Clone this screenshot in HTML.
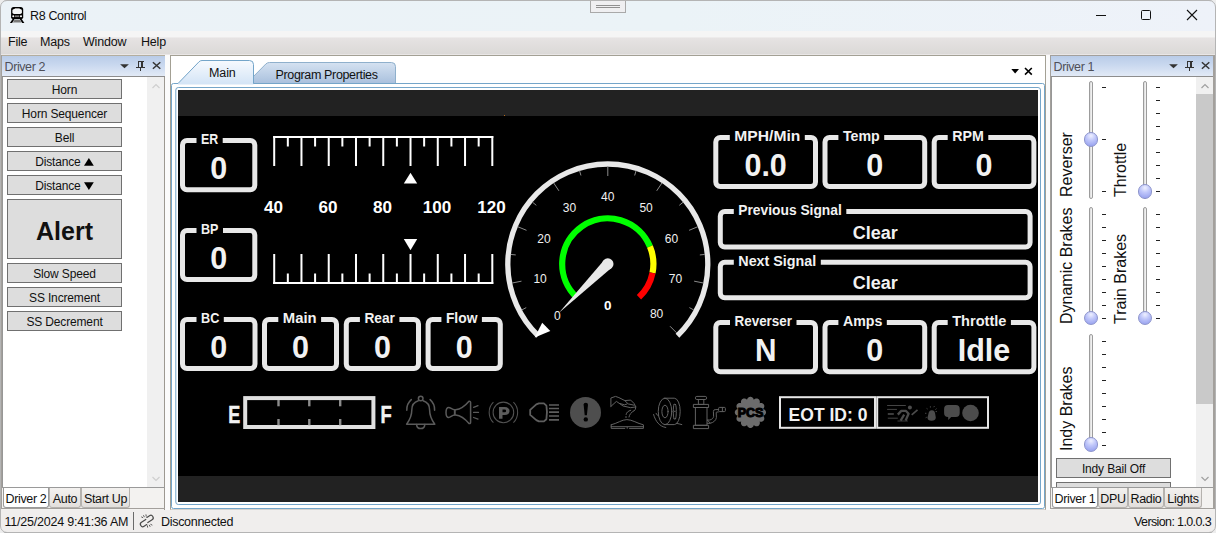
<!DOCTYPE html>
<html>
<head>
<meta charset="utf-8">
<title>R8 Control</title>
<style>
*{box-sizing:border-box;margin:0;padding:0}
html,body{width:1216px;height:533px;overflow:hidden;background:#f0eeed;font-family:"Liberation Sans",sans-serif;font-size:12px;color:#1a1a1a}
.abs{position:absolute}
#win{position:absolute;left:0;top:0;width:1216px;height:533px;overflow:hidden;background:#f0eeed}
#title{left:0;top:0;width:1216px;height:31px;background:linear-gradient(90deg,#ebf2f7 0%,#ebf3f7 55%,#eef2f9 100%)}
#title .cap{left:30px;top:9px;font-size:12.5px;color:#111;letter-spacing:-0.35px}
#menu{left:0;top:31px;width:1216px;height:24px;background:linear-gradient(#f5f5f5 0%,#f5f5f5 26%,#e6e3e3 28%,#dbd9d7 95.8%,#e9e6e6 95.9%)}
#menu span{position:absolute;top:4px;font-size:12.5px;color:#111;letter-spacing:-0.2px}
.phead{height:21px;background:linear-gradient(#b9cce8 0%,#c9d8ef 45%,#e2eaf6 100%);border-bottom:1px solid #8d8d8d}
.phead .t{position:absolute;left:2.5px;top:4px;font-size:12.5px;color:#4f4f58;letter-spacing:-0.4px}
.btn{position:absolute;background:#dddddd;border:1px solid #707070;text-align:center;font-size:12px;color:#111;letter-spacing:-0.15px}
.tab{position:absolute;top:487px;height:21px;font-size:12.5px;color:#111;text-align:center;line-height:24px;border-radius:0 0 3px 3px;letter-spacing:-0.35px;border:1px solid #b5b2ae;border-top:none;background:linear-gradient(#f4f2f0,#e2dfdc)}
.tab.sel{background:#fff;border-color:#9a9a9a}
.vlabel{position:absolute;font-size:16px;color:#111;white-space:nowrap;transform-origin:0 0;transform:rotate(-90deg)}
.track{position:absolute;width:4px;border:1px solid #9c9c9c;border-radius:2px;background:linear-gradient(90deg,#d8d8d8,#f8f8f8)}
.thumb{position:absolute;width:14.4px;height:14.4px;margin:0.3px;border-radius:50%;background:radial-gradient(circle at 50% 22%,#eef0ff 0%,#c0c7fa 40%,#8e99ec 100%);border:1px solid #8d94cc}
.tick{position:absolute;width:4px;height:1px;background:#222}
.box{position:absolute;border:4px solid #e6e6e6;border-radius:6px}
.box .lbl{position:absolute;top:-13px;background:#000;color:#f2f2f2;font-weight:bold;font-size:14px;padding:0 3px;line-height:16px;white-space:nowrap}
.box .val{position:absolute;left:0;right:0;text-align:center;color:#f2f2f2;font-weight:bold;font-size:27px;line-height:30px}
</style>
</head>
<body>
<div id="win">
  <!-- title bar -->
  <div id="title" class="abs">
    <svg class="abs" style="left:9px;top:6px" width="17" height="18" viewBox="9 6 17 18">
      <path d="M11.1 9.6 Q11.1 7 13.7 7 H20.6 Q23.2 7 23.2 9.6 V17.3 Q23.2 18.9 21.6 18.9 H12.7 Q11.1 18.9 11.1 17.3 Z" fill="#000"/>
      <rect x="14.6" y="8" width="5.2" height="1.2" rx="0.5" fill="#9a9a9a"/>
      <rect x="12.4" y="8.9" width="9.5" height="5" rx="1.7" fill="#f4f6f7"/>
      <rect x="15" y="15.4" width="4.3" height="1.7" fill="#7a7a7a"/>
      <circle cx="13.3" cy="16.2" r="1.05" fill="#fff"/>
      <circle cx="21" cy="16.2" r="1.05" fill="#fff"/>
      <path d="M12.8 18.8 L9.9 22.9 H12.1 L14.8 18.8 Z M21.5 18.8 L24.4 22.9 H22.2 L19.5 18.8 Z" fill="#000"/>
      <path d="M14.7 19.6 H19.6 L21.5 22.4 H12.8 Z" fill="#7a7a7a"/>
    </svg>
    <div class="abs cap">R8 Control</div>
    <div class="abs" style="left:0;top:0;width:1216px;height:1px;background:#c3c5c9"></div>
    <!-- grip -->
    <div class="abs" style="left:590px;top:0;width:36px;height:13px;border:1px solid #a9a9a9;border-top:none;background:#efeff1"></div>
    <div class="abs" style="left:596px;top:5px;width:24px;height:1px;background:#909090"></div>
    <div class="abs" style="left:596px;top:7px;width:24px;height:1px;background:#909090"></div>
    <!-- window buttons -->
    <svg class="abs" style="left:1090px;top:5px" width="120" height="20" viewBox="0 0 120 20">
      <path d="M6 10.5 H16" stroke="#111" stroke-width="1" fill="none"/>
      <rect x="51.5" y="5.5" width="9" height="9" rx="1" stroke="#111" stroke-width="1" fill="none"/>
      <path d="M97 5 L107 15 M107 5 L97 15" stroke="#111" stroke-width="1.1" fill="none"/>
    </svg>
  </div>
  <!-- menu -->
  <div id="menu" class="abs">
    <span style="left:8px">File</span>
    <span style="left:40px">Maps</span>
    <span style="left:83px">Window</span>
    <span style="left:141px">Help</span>
  </div>
  
  <!-- LEFT PANEL -->
  <div class="abs" style="left:0;top:55px;width:165px;height:1px;background:#b3ae9f"></div>
  <div class="abs" style="left:1051px;top:55px;width:165px;height:1px;background:#b3ae9f"></div>
  <div class="abs" style="left:0;top:55px;width:2px;height:454px;background:#a3a09c"></div>
  <div class="abs" style="left:2px;top:56px;width:163px;height:454px;background:#fff;border-right:1px solid #9c9891"></div>
  <div class="abs phead" style="left:2px;top:56px;width:163px">
    <div class="t">Driver 2</div>
    <svg class="abs" style="left:116px;top:3px" width="46" height="14" viewBox="0 0 46 14">
      <path d="M2.1 5.2 H10.9 L6.5 9.2 Z" fill="#333"/>
      <path d="M20 2 H26 V3 H25 V8 H27 V9 H23 V12 H22 V9 H18 V8 H20 V3 Z M21 3 V8 H23 V3 Z" fill="#333" fill-rule="evenodd" shape-rendering="crispEdges"/>
      <path d="M34.9 3.2 L42.3 9.8 M42.3 3.2 L34.9 9.8" stroke="#333" stroke-width="1.5" fill="none"/>
    </svg>
  </div>
  <div class="abs" style="left:2px;top:77px;width:1px;height:431px;background:#979797"></div>
  <div class="abs" style="left:147px;top:77px;width:17px;height:410px;background:#f0f0f0"></div>
  <svg class="abs" style="left:150px;top:82px" width="12" height="8" viewBox="0 0 12 8"><path d="M2.5 6 L6 2.5 L9.5 6" stroke="#cfcfcf" stroke-width="1.2" fill="none"/></svg>
  <svg class="abs" style="left:150px;top:475px" width="12" height="8" viewBox="0 0 12 8"><path d="M2.5 2 L6 5.5 L9.5 2" stroke="#cfcfcf" stroke-width="1.2" fill="none"/></svg>

  <div class="btn" style="left:7px;top:79px;width:115px;height:20px;line-height:20px">Horn</div>
  <div class="btn" style="left:7px;top:103px;width:115px;height:20px;line-height:20px">Horn Sequencer</div>
  <div class="btn" style="left:7px;top:127px;width:115px;height:20px;line-height:20px">Bell</div>
  <div class="btn" style="left:7px;top:151px;width:115px;height:20px;line-height:20px">Distance <svg width="10" height="8" viewBox="0 0 10 8" style="vertical-align:0px"><path d="M0 7.8 H9.8 L4.9 0 Z" fill="#000"/></svg></div>
  <div class="btn" style="left:7px;top:175px;width:115px;height:20px;line-height:20px">Distance <svg width="10" height="8" viewBox="0 0 10 8" style="vertical-align:0px"><path d="M0 0.2 H9.8 L4.9 8 Z" fill="#000"/></svg></div>
  <div class="btn" style="left:7px;top:199px;width:115px;height:60px;line-height:62px;font-size:25px;font-weight:bold;letter-spacing:0">Alert</div>
  <div class="btn" style="left:7px;top:263px;width:115px;height:20px;line-height:20px">Slow Speed</div>
  <div class="btn" style="left:7px;top:287px;width:115px;height:20px;line-height:20px">SS Increment</div>
  <div class="btn" style="left:7px;top:311px;width:115px;height:20px;line-height:20px">SS Decrement</div>

  <div class="abs" style="left:2px;top:487px;width:163px;height:23px;background:#f3f2f0;border-right:1px solid #9c9891"></div>
  <div class="tab sel" style="left:3px;width:46px">Driver 2</div>
  <div class="tab" style="left:49px;width:32px">Auto</div>
  <div class="tab" style="left:81px;width:49px">Start Up</div>
  <div class="abs" style="left:2px;top:487px;width:163px;height:1px;background:#9a9a9a"></div>
  <div class="abs" style="left:0px;top:508px;width:165px;height:1px;background:#a3a09c"></div>

  <div class="abs" style="left:165px;top:55px;width:5px;height:455px;background:#fbfbfb"></div>
  <div class="abs" style="left:1046px;top:55px;width:5px;height:455px;background:#fbfbfb"></div>
  <!-- CENTER PANEL -->
  <div class="abs" style="left:170px;top:55px;width:876px;height:455px;background:#fff;border:1px solid #a3a094;border-bottom-color:#d5d2ce"></div>
  <!-- tab strip + frame drawn in svg -->
<svg class="abs" style="left:170px;top:56px" width="876" height="454" viewBox="170 56 876 454">
  <defs>
    <linearGradient id="tabsel" x1="0" y1="0" x2="0" y2="1"><stop offset="0" stop-color="#f7fafe"/><stop offset="1" stop-color="#d3e4f6"/></linearGradient>
    <linearGradient id="tabun" x1="0" y1="0" x2="0" y2="1"><stop offset="0" stop-color="#d5e2f1"/><stop offset="1" stop-color="#a9c0dd"/></linearGradient>
  </defs>
  <!-- unselected tab -->
  <path d="M246.5 83.5 L265.8 64 Q267.3 62.5 269.5 62.5 H391.5 Q395.5 62.5 395.5 66.5 V83.5 Z" fill="url(#tabun)" stroke="#8fb0cc" stroke-width="1"/>
  <!-- selected tab -->
  <path d="M178 83.5 L199 61.8 Q200.3 60.5 202 60.5 H249.5 Q253.5 60.5 253.5 64.5 V84.5 H178 Z" fill="url(#tabsel)"/>
  <path d="M178 83.5 L199 61.8 Q200.3 60.5 202 60.5 H249.5 Q253.5 60.5 253.5 64.5 V83.5" fill="none" stroke="#74a5c9" stroke-width="1"/>
  <!-- outer frame -->
  <path d="M178 83.5 H173.5 Q171.5 83.5 171.5 85.5 V506.5 Q171.5 508.5 173.5 508.5 H1042.5 Q1044.5 508.5 1044.5 506.5 V85.5 Q1044.5 83.5 1042.5 83.5 H253.5" fill="none" stroke="#74a5c9" stroke-width="1"/>
  <!-- inner frame -->
  <rect x="175.8" y="87.5" width="864.7" height="417" rx="2.5" fill="none" stroke="#74a5c9" stroke-width="1"/>
  <!-- dropdown and close -->
  <path d="M1011.3 69 H1019 L1015.15 73.6 Z" fill="#000"/>
  <path d="M1025 68 L1031.8 74.6 M1031.8 68 L1025 74.6" stroke="#000" stroke-width="1.6" fill="none"/>
</svg>
<div class="abs" style="left:209px;top:66px;font-size:12.5px;color:#111;letter-spacing:-0.1px">Main</div>
<div class="abs" style="left:275.5px;top:68px;font-size:12.5px;color:#111;letter-spacing:-0.35px">Program Properties</div>
<div class="abs" style="left:178px;top:90px;width:860px;height:412px;background:#000"></div>
<div class="abs" style="left:178px;top:90px;width:860px;height:26px;background:#222"></div>
<div class="abs" style="left:178px;top:476px;width:860px;height:26px;background:#222"></div>
<div class="abs" style="left:504px;top:115px;width:1px;height:1px;background:#b56a1c"></div>
<svg class="abs" style="left:178px;top:90px" width="860" height="412" viewBox="178 90 860 412" font-family="Liberation Sans, sans-serif">
<rect x="182.5" y="140.5" width="72.30000000000001" height="49.30000000000001" rx="4.5" fill="none" stroke="#e8e8e8" stroke-width="5"/>
<rect x="196.5" y="130" width="26.19999999999999" height="16" fill="#000"/>
<text x="201" y="144.4" font-size="14" font-weight="bold" fill="#f2f2f2" textLength="17.2" lengthAdjust="spacingAndGlyphs">ER</text>
<text x="218.65" y="179" font-size="30.5" font-weight="bold" fill="#f2f2f2" text-anchor="middle">0</text>
<rect x="182.5" y="230.5" width="72.30000000000001" height="49" rx="4.5" fill="none" stroke="#e8e8e8" stroke-width="5"/>
<rect x="196.5" y="220" width="26.5" height="16" fill="#000"/>
<text x="201" y="234.4" font-size="14" font-weight="bold" fill="#f2f2f2" textLength="17.5" lengthAdjust="spacingAndGlyphs">BP</text>
<text x="218.65" y="269" font-size="30.5" font-weight="bold" fill="#f2f2f2" text-anchor="middle">0</text>
<rect x="182.5" y="319.5" width="72.5" height="49" rx="4.5" fill="none" stroke="#e8e8e8" stroke-width="5"/>
<rect x="196.5" y="309" width="27.30000000000001" height="16" fill="#000"/>
<text x="201" y="323.4" font-size="14" font-weight="bold" fill="#f2f2f2" textLength="18.3" lengthAdjust="spacingAndGlyphs">BC</text>
<text x="218.75" y="358" font-size="30.5" font-weight="bold" fill="#f2f2f2" text-anchor="middle">0</text>
<rect x="264.5" y="319.5" width="72" height="49" rx="4.5" fill="none" stroke="#e8e8e8" stroke-width="5"/>
<rect x="278.3" y="309" width="42.80000000000001" height="16" fill="#000"/>
<text x="282.8" y="323.4" font-size="14" font-weight="bold" fill="#f2f2f2" textLength="33.8" lengthAdjust="spacingAndGlyphs">Main</text>
<text x="300.5" y="358" font-size="30.5" font-weight="bold" fill="#f2f2f2" text-anchor="middle">0</text>
<rect x="346.3" y="319.5" width="72.19999999999999" height="49" rx="4.5" fill="none" stroke="#e8e8e8" stroke-width="5"/>
<rect x="359.9" y="309" width="39.5" height="16" fill="#000"/>
<text x="364.4" y="323.4" font-size="14" font-weight="bold" fill="#f2f2f2" textLength="30.5" lengthAdjust="spacingAndGlyphs">Rear</text>
<text x="382.4" y="358" font-size="30.5" font-weight="bold" fill="#f2f2f2" text-anchor="middle">0</text>
<rect x="428.1" y="319.5" width="72.19999999999999" height="49" rx="4.5" fill="none" stroke="#e8e8e8" stroke-width="5"/>
<rect x="441.4" y="309" width="40.5" height="16" fill="#000"/>
<text x="445.9" y="323.4" font-size="14" font-weight="bold" fill="#f2f2f2" textLength="31.5" lengthAdjust="spacingAndGlyphs">Flow</text>
<text x="464.20000000000005" y="358" font-size="30.5" font-weight="bold" fill="#f2f2f2" text-anchor="middle">0</text>
<rect x="715.8" y="137.5" width="99.70000000000005" height="49" rx="4.5" fill="none" stroke="#e8e8e8" stroke-width="5"/>
<rect x="729.8" y="127" width="75.0" height="16" fill="#000"/>
<text x="734.3" y="141.4" font-size="14" font-weight="bold" fill="#f2f2f2" textLength="66" lengthAdjust="spacingAndGlyphs">MPH/Min</text>
<text x="765.65" y="176" font-size="30.5" font-weight="bold" fill="#f2f2f2" text-anchor="middle">0.0</text>
<rect x="825.0" y="137.5" width="99.70000000000005" height="49" rx="4.5" fill="none" stroke="#e8e8e8" stroke-width="5"/>
<rect x="838.4" y="127" width="45.799999999999955" height="16" fill="#000"/>
<text x="842.9" y="141.4" font-size="14" font-weight="bold" fill="#f2f2f2" textLength="36.8" lengthAdjust="spacingAndGlyphs">Temp</text>
<text x="874.85" y="176" font-size="30.5" font-weight="bold" fill="#f2f2f2" text-anchor="middle">0</text>
<rect x="934.2" y="137.5" width="99.70000000000005" height="49" rx="4.5" fill="none" stroke="#e8e8e8" stroke-width="5"/>
<rect x="947.7" y="127" width="40.60000000000002" height="16" fill="#000"/>
<text x="952.2" y="141.4" font-size="14" font-weight="bold" fill="#f2f2f2" textLength="31.6" lengthAdjust="spacingAndGlyphs">RPM</text>
<text x="984.0500000000001" y="176" font-size="30.5" font-weight="bold" fill="#f2f2f2" text-anchor="middle">0</text>
<rect x="720.3" y="211.5" width="309.79999999999995" height="35.5" rx="4.5" fill="none" stroke="#e8e8e8" stroke-width="5"/>
<rect x="733.8" y="201" width="112.5" height="16" fill="#000"/>
<text x="738.3" y="215.4" font-size="14" font-weight="bold" fill="#f2f2f2" textLength="103.5" lengthAdjust="spacingAndGlyphs">Previous Signal</text>
<text x="875.1999999999999" y="238.6" font-size="18" font-weight="bold" fill="#f2f2f2" text-anchor="middle">Clear</text>
<rect x="720.3" y="262.3" width="309.79999999999995" height="35.5" rx="4.5" fill="none" stroke="#e8e8e8" stroke-width="5"/>
<rect x="733.8" y="251.8" width="87.0" height="16" fill="#000"/>
<text x="738.3" y="266.2" font-size="14" font-weight="bold" fill="#f2f2f2" textLength="78" lengthAdjust="spacingAndGlyphs">Next Signal</text>
<text x="875.1999999999999" y="289.4" font-size="18" font-weight="bold" fill="#f2f2f2" text-anchor="middle">Clear</text>
<rect x="715.8" y="322.5" width="99.70000000000005" height="49.30000000000001" rx="4.5" fill="none" stroke="#e8e8e8" stroke-width="5"/>
<rect x="730.0" y="312" width="66.5" height="16" fill="#000"/>
<text x="734.5" y="326.4" font-size="14" font-weight="bold" fill="#f2f2f2" textLength="57.5" lengthAdjust="spacingAndGlyphs">Reverser</text>
<text x="765.65" y="361" font-size="30.5" font-weight="bold" fill="#f2f2f2" text-anchor="middle" textLength="21.5" lengthAdjust="spacingAndGlyphs">N</text>
<rect x="825.0" y="322.5" width="99.70000000000005" height="49.30000000000001" rx="4.5" fill="none" stroke="#e8e8e8" stroke-width="5"/>
<rect x="838.4" y="312" width="48.39999999999998" height="16" fill="#000"/>
<text x="842.9" y="326.4" font-size="14" font-weight="bold" fill="#f2f2f2" textLength="39.4" lengthAdjust="spacingAndGlyphs">Amps</text>
<text x="874.85" y="361" font-size="30.5" font-weight="bold" fill="#f2f2f2" text-anchor="middle">0</text>
<rect x="934.2" y="322.5" width="99.70000000000005" height="49.30000000000001" rx="4.5" fill="none" stroke="#e8e8e8" stroke-width="5"/>
<rect x="947.7" y="312" width="63.200000000000045" height="16" fill="#000"/>
<text x="952.2" y="326.4" font-size="14" font-weight="bold" fill="#f2f2f2" textLength="54.2" lengthAdjust="spacingAndGlyphs">Throttle</text>
<text x="984.0500000000001" y="361" font-size="30.5" font-weight="bold" fill="#f2f2f2" text-anchor="middle">Idle</text>
<rect x="273.2" y="136" width="220.10000000000002" height="2" fill="#fff"/>
<rect x="273.2" y="282" width="220.10000000000002" height="2" fill="#fff"/>
<rect x="273.20" y="136" width="2" height="30" fill="#fff"/>
<rect x="273.20" y="254" width="2" height="30" fill="#fff"/>
<rect x="286.83" y="136" width="2" height="10.5" fill="#fff"/>
<rect x="286.83" y="273.5" width="2" height="10.5" fill="#fff"/>
<rect x="300.46" y="136" width="2" height="30" fill="#fff"/>
<rect x="300.46" y="254" width="2" height="30" fill="#fff"/>
<rect x="314.09" y="136" width="2" height="10.5" fill="#fff"/>
<rect x="314.09" y="273.5" width="2" height="10.5" fill="#fff"/>
<rect x="327.73" y="136" width="2" height="30" fill="#fff"/>
<rect x="327.73" y="254" width="2" height="30" fill="#fff"/>
<rect x="341.36" y="136" width="2" height="10.5" fill="#fff"/>
<rect x="341.36" y="273.5" width="2" height="10.5" fill="#fff"/>
<rect x="354.99" y="136" width="2" height="30" fill="#fff"/>
<rect x="354.99" y="254" width="2" height="30" fill="#fff"/>
<rect x="368.62" y="136" width="2" height="10.5" fill="#fff"/>
<rect x="368.62" y="273.5" width="2" height="10.5" fill="#fff"/>
<rect x="382.25" y="136" width="2" height="30" fill="#fff"/>
<rect x="382.25" y="254" width="2" height="30" fill="#fff"/>
<rect x="395.88" y="136" width="2" height="10.5" fill="#fff"/>
<rect x="395.88" y="273.5" width="2" height="10.5" fill="#fff"/>
<rect x="409.51" y="136" width="2" height="30" fill="#fff"/>
<rect x="409.51" y="254" width="2" height="30" fill="#fff"/>
<rect x="423.14" y="136" width="2" height="10.5" fill="#fff"/>
<rect x="423.14" y="273.5" width="2" height="10.5" fill="#fff"/>
<rect x="436.77" y="136" width="2" height="30" fill="#fff"/>
<rect x="436.77" y="254" width="2" height="30" fill="#fff"/>
<rect x="450.41" y="136" width="2" height="10.5" fill="#fff"/>
<rect x="450.41" y="273.5" width="2" height="10.5" fill="#fff"/>
<rect x="464.04" y="136" width="2" height="30" fill="#fff"/>
<rect x="464.04" y="254" width="2" height="30" fill="#fff"/>
<rect x="477.67" y="136" width="2" height="10.5" fill="#fff"/>
<rect x="477.67" y="273.5" width="2" height="10.5" fill="#fff"/>
<rect x="491.30" y="136" width="2" height="30" fill="#fff"/>
<rect x="491.30" y="254" width="2" height="30" fill="#fff"/>
<text x="273.40" y="213" font-size="16.5" font-weight="bold" fill="#fff" text-anchor="middle" textLength="19" lengthAdjust="spacingAndGlyphs">40</text>
<text x="327.93" y="213" font-size="16.5" font-weight="bold" fill="#fff" text-anchor="middle" textLength="19" lengthAdjust="spacingAndGlyphs">60</text>
<text x="382.45" y="213" font-size="16.5" font-weight="bold" fill="#fff" text-anchor="middle" textLength="19" lengthAdjust="spacingAndGlyphs">80</text>
<text x="436.97" y="213" font-size="16.5" font-weight="bold" fill="#fff" text-anchor="middle" textLength="28.5" lengthAdjust="spacingAndGlyphs">100</text>
<text x="491.50" y="213" font-size="16.5" font-weight="bold" fill="#fff" text-anchor="middle" textLength="28.5" lengthAdjust="spacingAndGlyphs">120</text>
<path d="M403.8 183.5 L417.2 183.5 L410.5 172.7 Z" fill="#fff"/>
<path d="M403.8 239 L417.2 239 L410.5 250.2 Z" fill="#fff"/>
<path d="M538.14 335.74 A100 100 0 1 1 677.46 335.74" fill="none" stroke="#e8e8e8" stroke-width="5.3"/>
<path d="M538.86 332.94 L545.57 326.23" stroke="#8a8a8a" stroke-width="1"/>
<path d="M521.81 309.96 L526.22 307.60" stroke="#8a8a8a" stroke-width="1"/>
<path d="M512.17 283.02 L521.49 281.17" stroke="#8a8a8a" stroke-width="1"/>
<path d="M510.77 254.44 L515.75 254.93" stroke="#8a8a8a" stroke-width="1"/>
<path d="M517.72 226.69 L526.50 230.32" stroke="#8a8a8a" stroke-width="1"/>
<path d="M532.43 202.15 L536.30 205.32" stroke="#8a8a8a" stroke-width="1"/>
<path d="M553.63 182.93 L558.91 190.83" stroke="#8a8a8a" stroke-width="1"/>
<path d="M579.50 170.70 L580.95 175.48" stroke="#8a8a8a" stroke-width="1"/>
<path d="M607.80 166.50 L607.80 176.00" stroke="#8a8a8a" stroke-width="1"/>
<path d="M636.10 170.70 L634.65 175.48" stroke="#8a8a8a" stroke-width="1"/>
<path d="M661.97 182.93 L656.69 190.83" stroke="#8a8a8a" stroke-width="1"/>
<path d="M683.17 202.15 L679.30 205.32" stroke="#8a8a8a" stroke-width="1"/>
<path d="M697.88 226.69 L689.10 230.32" stroke="#8a8a8a" stroke-width="1"/>
<path d="M704.83 254.44 L699.85 254.93" stroke="#8a8a8a" stroke-width="1"/>
<path d="M703.43 283.02 L694.11 281.17" stroke="#8a8a8a" stroke-width="1"/>
<path d="M693.79 309.96 L689.38 307.60" stroke="#8a8a8a" stroke-width="1"/>
<path d="M676.74 332.94 L670.03 326.23" stroke="#8a8a8a" stroke-width="1"/>
<text x="557.24" y="320.16" font-size="12" fill="#f0f0f0" text-anchor="middle">0</text>
<text x="540.13" y="283.06" font-size="12" fill="#f0f0f0" text-anchor="middle">10</text>
<text x="544.05" y="243.19" font-size="12" fill="#f0f0f0" text-anchor="middle">20</text>
<text x="569.47" y="212.23" font-size="12" fill="#f0f0f0" text-anchor="middle">30</text>
<text x="607.80" y="200.60" font-size="12" fill="#f0f0f0" text-anchor="middle">40</text>
<text x="646.13" y="212.23" font-size="12" fill="#f0f0f0" text-anchor="middle">50</text>
<text x="671.55" y="243.19" font-size="12" fill="#f0f0f0" text-anchor="middle">60</text>
<text x="675.47" y="283.06" font-size="12" fill="#f0f0f0" text-anchor="middle">70</text>
<text x="656.59" y="318.39" font-size="12" fill="#f0f0f0" text-anchor="middle">80</text>
<path d="M576.62 297.27 A45.6 45.6 0 1 1 649.93 246.55" fill="none" stroke="#00ff00" stroke-width="6.2"/>
<path d="M649.93 246.55 A45.6 45.6 0 0 1 652.52 272.90" fill="none" stroke="#ffff00" stroke-width="6.2"/>
<path d="M652.52 272.90 A45.6 45.6 0 0 1 638.98 297.27" fill="none" stroke="#ff0000" stroke-width="6.2"/>
<path d="M603.98 260.18 L559.01 312.79 L611.62 267.82 Z" fill="#e8e8e8"/>
<circle cx="607.8" cy="264" r="5.7" fill="#e8e8e8"/>
<text x="607.8" y="310" font-size="13.5" font-weight="bold" fill="#fff" text-anchor="middle">0</text>
<path d="M534.7 337.6 L542.2 322.8 L550.3 331 Z" fill="#fff"/>
<rect x="245.2" y="398.1" width="128.2" height="28.9" fill="none" stroke="#e0e0e0" stroke-width="4"/>
<rect x="277.3" y="400" width="2.4" height="6.3" fill="#8c8c8c"/>
<rect x="277.3" y="419" width="2.4" height="6.3" fill="#8c8c8c"/>
<rect x="308.1" y="400" width="2.4" height="6.3" fill="#8c8c8c"/>
<rect x="308.1" y="419" width="2.4" height="6.3" fill="#8c8c8c"/>
<rect x="339.0" y="400" width="2.4" height="6.3" fill="#8c8c8c"/>
<rect x="339.0" y="419" width="2.4" height="6.3" fill="#8c8c8c"/>
<text x="228.2" y="422.7" font-size="24.3" font-weight="bold" fill="#f2f2f2" stroke="#f2f2f2" stroke-width="0.5" textLength="12" lengthAdjust="spacingAndGlyphs">E</text>
<text x="380.6" y="422.7" font-size="24.3" font-weight="bold" fill="#f2f2f2" stroke="#f2f2f2" stroke-width="0.5" textLength="11.2" lengthAdjust="spacingAndGlyphs">F</text>
<rect x="780" y="397.2" width="95" height="30.6" fill="none" stroke="#e6e6e6" stroke-width="2"/>
<rect x="877.2" y="397.2" width="110.8" height="30.6" fill="none" stroke="#e6e6e6" stroke-width="2"/>
<text x="788.6" y="420.8" font-size="18" font-weight="bold" fill="#f2f2f2" textLength="78.8" lengthAdjust="spacingAndGlyphs">EOT ID: 0</text>
<!-- ICONS -->
<g fill="none" stroke="#5a5a5a" stroke-width="1.5" stroke-linecap="round" stroke-linejoin="round">
  <!-- bell -->
  <circle cx="420.7" cy="398.5" r="2.3"/>
  <path d="M418.3 400.8 C413.5 402.2 411.8 406 411.8 410 C411.8 416 410.5 419 406.6 424.2 H434.8 C430.9 419 429.6 416 429.6 410 C429.6 406 427.9 402.2 423.1 400.8"/>
  <path d="M416.6 424.6 C416.8 427.2 418.6 428.6 420.7 428.6 C422.8 428.6 424.6 427.2 424.8 424.6"/>
  <path d="M411.3 399.6 C408 402.5 406.6 406 406.8 410.2"/>
  <path d="M430.1 399.6 C433.4 402.5 434.8 406 434.6 410.2"/>
  <!-- horn -->
  <path d="M454.6 409.8 C452 409.6 450.5 407.4 448.8 407.4 C447.2 407.4 446 409.6 446 412.4 C446 415.2 447.2 417.4 448.8 417.4 C450.5 417.4 452 415.2 454.6 415 Z"/>
  <path d="M454.9 409.8 V415"/>
  <path d="M455.6 409.8 C461 409.2 465.5 405.5 469 401.3 Q470.6 401 470.6 402.6 V422.2 Q470.6 423.8 469 423.5 C465.5 419.3 461 415.6 455.6 415"/>
  <path d="M473.6 407.3 L478 405.7 M473.6 412.4 H478.5 M473.6 417.5 L478 419.1" stroke-width="1.3"/>
</g>
<!-- parking -->
<g fill="none" stroke="#525252" stroke-width="1.05">
  <circle cx="503.4" cy="412.4" r="10.3"/>
  <path d="M493.4 402.2 A14.4 14.4 0 0 0 493.4 422.6"/>
  <path d="M513.4 402.2 A14.4 14.4 0 0 1 513.4 422.6"/>
</g>
<path fill-rule="evenodd" fill="#5c5c5c" d="M499 418.7 V406.9 H504.6 C508 406.9 509.5 408.6 509.5 410.9 C509.5 413.3 507.8 415 504.6 415 H502.5 V418.7 Z M502.5 409.6 V412.3 H504.1 C505.6 412.3 506.1 411.8 506.1 410.95 C506.1 410.1 505.6 409.6 504.1 409.6 Z"/>
<!-- headlight -->
<g fill="none" stroke="#5e5e5e">
  <path d="M530.2 409.8 L536.3 404.4 L538.9 403.4 H543.9 L546.4 405.6 Q547.6 412.4 546.4 419.2 L543.9 421.4 H538.9 L536.3 420.1 L530.2 414.9 Z" stroke-width="1.8" stroke-linejoin="round"/>
  <path d="M549 405 H559 M549 408.5 H559 M549 412.2 H559 M549 416 H559 M549 419.8 H559" stroke-width="1.7"/>
</g>
<!-- alert -->
<circle cx="585.5" cy="412.4" r="15.5" fill="#4e4e4e"/>
<path d="M583.6 404.6 Q583.6 402.8 585.8 402.8 Q588 402.8 588 404.6 L586.9 415.2 H584.7 Z" fill="#000"/>
<circle cx="585.8" cy="419.4" r="2.2" fill="#000"/>
<!-- sand -->
<g fill="none" stroke="#626262" stroke-width="1" stroke-linejoin="round" stroke-linecap="round">
  <path d="M610.9 406.4 V398 L615.5 396.4 L618.9 397.6 L624.8 400.6 L630.7 400.1 L634.1 403.5 L635.8 406.9 L635.3 409.4 L634.1 410.7"/>
  <path d="M610.9 406.4 L616.4 401.4 L623.1 406 L630.7 407.7 L635.8 406.9"/>
  <path d="M624.8 400.6 L628.2 403.9 L634.1 405.2"/>
  <path d="M620 403.6 L624.5 404.8 L627 404"/>
  <path d="M630.7 410.3 C628 411 626.4 412.5 626.1 414.5"/>
  <path d="M634.1 410.7 C631 412.5 629.4 414.5 629 417"/>
  <path d="M626 416.5 V417.6"/>
  <path d="M611.2 424.8 C617 423.5 622 419.6 626.9 419.6 C632 419.6 637.5 423.5 643.4 424.8 V428.4 H629.5 M624.8 428.4 H611.2 V424.8 M611.2 426.7 H643.4" />
  <path d="M627.2 427.2 V428.4"/>
</g>
<!-- wheel slip -->
<g fill="none" stroke="#626262" stroke-width="1" stroke-linecap="round">
  <ellipse cx="665" cy="411.4" rx="6.75" ry="13.2"/>
  <ellipse cx="665" cy="411.5" rx="3.1" ry="6.3"/>
  <path d="M664.2 398.2 H674.3 A5.9 13.2 0 0 1 674.3 424.6 H664.2"/>
  <path d="M674 404.4 C673 406.4 673 416.6 674 418.8"/>
  <path d="M675.6 404.4 C676.6 406.4 676.6 416.6 675.6 418.8"/>
  <path d="M674 404.4 Q674.8 403.6 675.6 404.4 M674 418.8 Q674.8 419.6 675.6 418.8 M674.3 411.3 H675.3"/>
  <path d="M653.6 414.5 C655.5 421.5 659.5 426.5 665.8 427.5"/>
  <path d="M656.1 413.3 C656.8 414.8 657.6 415.6 658.7 416"/>
  <path d="M676.4 423.3 C678.5 423.6 680 424.2 681.8 424.6"/>
</g>
<!-- pump -->
<g fill="none" stroke="#626262" stroke-width="1" stroke-linejoin="round">
  <rect x="695.4" y="396.4" width="11.2" height="3.1" rx="1.4"/>
  <rect x="698.4" y="399.5" width="5.4" height="4.9"/>
  <rect x="693.4" y="404.4" width="15.2" height="3.1"/>
  <rect x="695.4" y="407.5" width="11.6" height="17.8"/>
  <rect x="693.4" y="425.3" width="15.2" height="3.3"/>
  <path d="M707 420 H709.8 C712 419.5 713.4 418 713.6 416.5 L713.4 411.5 Q713.4 409.6 715.2 409.6 H718.6"/>
  <path d="M707 423.3 H710 C713.5 422.6 716 420.5 716.4 417.5 L716.2 412.8 Q716.2 412 717 412 L718.6 412"/>
  <path d="M707.3 420 L710.3 423.2"/>
  <rect x="718.6" y="407.4" width="6.8" height="4.2" rx="1"/>
  <path d="M722.4 407.4 V411.6"/>
</g>
<!-- PCS -->
<path id="pcsb" fill="#6c6c6c" d="M750.40 396.80 L750.81 396.83 L751.21 396.91 L751.61 397.05 L751.99 397.24 L752.36 397.49 L752.71 397.79 L753.04 398.15 L753.34 398.57 L753.60 399.07 L753.76 399.84 L754.29 399.25 L754.77 398.95 L755.24 398.74 L755.70 398.59 L756.16 398.50 L756.60 398.48 L757.03 398.50 L757.44 398.58 L757.83 398.71 L758.20 398.89 L758.54 399.12 L758.85 399.39 L759.12 399.71 L759.36 400.07 L759.56 400.47 L759.71 400.90 L759.81 401.38 L759.86 401.89 L759.84 402.46 L759.59 403.21 L760.34 402.96 L760.91 402.94 L761.42 402.99 L761.90 403.09 L762.33 403.24 L762.73 403.44 L763.09 403.68 L763.41 403.95 L763.68 404.26 L763.91 404.60 L764.09 404.97 L764.22 405.36 L764.30 405.77 L764.32 406.20 L764.30 406.64 L764.21 407.10 L764.06 407.56 L763.85 408.03 L763.55 408.51 L762.96 409.04 L763.73 409.20 L764.23 409.46 L764.65 409.76 L765.01 410.09 L765.31 410.44 L765.56 410.81 L765.75 411.19 L765.89 411.59 L765.97 411.99 L766.00 412.40 L765.97 412.81 L765.89 413.21 L765.75 413.61 L765.56 413.99 L765.31 414.36 L765.01 414.71 L764.65 415.04 L764.23 415.34 L763.73 415.60 L762.96 415.76 L763.55 416.29 L763.85 416.77 L764.06 417.24 L764.21 417.70 L764.30 418.16 L764.32 418.60 L764.30 419.03 L764.22 419.44 L764.09 419.83 L763.91 420.20 L763.68 420.54 L763.41 420.85 L763.09 421.12 L762.73 421.36 L762.33 421.56 L761.90 421.71 L761.42 421.81 L760.91 421.86 L760.34 421.84 L759.59 421.59 L759.84 422.34 L759.86 422.91 L759.81 423.42 L759.71 423.90 L759.56 424.33 L759.36 424.73 L759.12 425.09 L758.85 425.41 L758.54 425.68 L758.20 425.91 L757.83 426.09 L757.44 426.22 L757.03 426.30 L756.60 426.32 L756.16 426.30 L755.70 426.21 L755.24 426.06 L754.77 425.85 L754.29 425.55 L753.76 424.96 L753.60 425.73 L753.34 426.23 L753.04 426.65 L752.71 427.01 L752.36 427.31 L751.99 427.56 L751.61 427.75 L751.21 427.89 L750.81 427.97 L750.40 428.00 L749.99 427.97 L749.59 427.89 L749.19 427.75 L748.81 427.56 L748.44 427.31 L748.09 427.01 L747.76 426.65 L747.46 426.23 L747.20 425.73 L747.04 424.96 L746.51 425.55 L746.03 425.85 L745.56 426.06 L745.10 426.21 L744.64 426.30 L744.20 426.32 L743.77 426.30 L743.36 426.22 L742.97 426.09 L742.60 425.91 L742.26 425.68 L741.95 425.41 L741.68 425.09 L741.44 424.73 L741.24 424.33 L741.09 423.90 L740.99 423.42 L740.94 422.91 L740.96 422.34 L741.21 421.59 L740.46 421.84 L739.89 421.86 L739.38 421.81 L738.90 421.71 L738.47 421.56 L738.07 421.36 L737.71 421.12 L737.39 420.85 L737.12 420.54 L736.89 420.20 L736.71 419.83 L736.58 419.44 L736.50 419.03 L736.48 418.60 L736.50 418.16 L736.59 417.70 L736.74 417.24 L736.95 416.77 L737.25 416.29 L737.84 415.76 L737.07 415.60 L736.57 415.34 L736.15 415.04 L735.79 414.71 L735.49 414.36 L735.24 413.99 L735.05 413.61 L734.91 413.21 L734.83 412.81 L734.80 412.40 L734.83 411.99 L734.91 411.59 L735.05 411.19 L735.24 410.81 L735.49 410.44 L735.79 410.09 L736.15 409.76 L736.57 409.46 L737.07 409.20 L737.84 409.04 L737.25 408.51 L736.95 408.03 L736.74 407.56 L736.59 407.10 L736.50 406.64 L736.48 406.20 L736.50 405.77 L736.58 405.36 L736.71 404.97 L736.89 404.60 L737.12 404.26 L737.39 403.95 L737.71 403.68 L738.07 403.44 L738.47 403.24 L738.90 403.09 L739.38 402.99 L739.89 402.94 L740.46 402.96 L741.21 403.21 L740.96 402.46 L740.94 401.89 L740.99 401.38 L741.09 400.90 L741.24 400.47 L741.44 400.07 L741.68 399.71 L741.95 399.39 L742.26 399.12 L742.60 398.89 L742.97 398.71 L743.36 398.58 L743.77 398.50 L744.20 398.48 L744.64 398.50 L745.10 398.59 L745.56 398.74 L746.03 398.95 L746.51 399.25 L747.04 399.84 L747.20 399.07 L747.46 398.57 L747.76 398.15 L748.09 397.79 L748.44 397.49 L748.81 397.24 L749.19 397.05 L749.59 396.91 L749.99 396.83 L750.40 396.80 Z"/>
<text x="750.5" y="417" font-size="12.5" font-weight="bold" fill="#000" stroke="#000" stroke-width="1.1" text-anchor="middle" textLength="25.6" lengthAdjust="spacingAndGlyphs">PCS</text>
<!-- status icons -->
<g fill="none" stroke="#4c4c4c" stroke-linecap="butt">
  <path d="M887.1 405.5 H905.8 M887.1 409.4 H896.9 M887.8 418.2 H897.8" stroke-width="0.9"/>
  <path d="M887.8 414 H893.8" stroke-width="1.6"/>
  <path d="M897.8 414.6 L901.3 410.9 H906 L908.6 413.8 L905.6 420.4" stroke-width="2.3" stroke-linejoin="round"/>
  <path d="M904.2 414.6 L900.6 420.6" stroke-width="2.2"/>
  <path d="M897.5 421 H907.8" stroke-width="0.8"/>
  <path d="M911.7 414.9 L917.5 409.9" stroke-width="1.7"/>
</g>
<circle cx="909.9" cy="407.6" r="2" fill="#4c4c4c"/>
<!-- bulb -->
<path d="M931.9 410.3 C934 410.3 935 412 935.2 414 L935.8 417.5 C935.8 419.6 934 420.7 931.6 420.7 C929.2 420.7 927.4 419.6 927.5 417.5 L928.4 414 C928.7 412 929.8 410.3 931.9 410.3 Z" fill="#4c4c4c"/>
<g stroke="#4c4c4c" stroke-width="0.9" fill="none">
  <path d="M930.4 406.2 V407.6 M933.6 407.2 L934.6 406 M935.4 409.6 L936.6 408.6 M927.6 409 L926.6 408.4 M925 413.3 H926.4 M925.6 417.8 L926.8 417.2 M935.6 411.6 H937"/>
</g>
<!-- speech bubble -->
<path d="M948 405 H955.8 Q959.7 405 959.7 408.9 V413 Q959.7 416.9 955.8 416.9 H951.2 L948.2 420 V416.9 H948 Q944.1 416.9 944.1 413 V408.9 Q944.1 405 948 405 Z" fill="#4c4c4c"/>
<circle cx="970.5" cy="413" r="8.3" fill="#4c4c4c"/>

</svg>


  <!-- RIGHT PANEL -->
  <div class="abs" style="left:1050px;top:55px;width:166px;height:454px;background:#a3a09c"></div>
<div class="abs" style="left:1051px;top:56px;width:162px;height:454px;background:#fff"></div>
<div class="abs phead" style="left:1051px;top:56px;width:162px">
    <div class="t">Driver 1</div>
    <svg class="abs" style="left:116px;top:3px" width="46" height="14" viewBox="0 0 46 14">
      <path d="M2.1 5.2 H10.9 L6.5 9.2 Z" fill="#333"/>
      <path d="M20 2 H26 V3 H25 V8 H27 V9 H23 V12 H22 V9 H18 V8 H20 V3 Z M21 3 V8 H23 V3 Z" fill="#333" fill-rule="evenodd" shape-rendering="crispEdges"/>
      <path d="M34.9 3.2 L42.3 9.8 M42.3 3.2 L34.9 9.8" stroke="#333" stroke-width="1.5" fill="none"/>
    </svg>
  </div>
<div class="abs" style="left:1051px;top:77px;width:1px;height:431px;background:#979797"></div>
<div class="abs" style="left:1196px;top:77px;width:17px;height:410px;background:#f0f0f0"></div>
<div class="abs" style="left:1196px;top:94px;width:17px;height:310px;background:#c9c9c9"></div>
<svg class="abs" style="left:1198.5px;top:82px" width="12" height="8" viewBox="0 0 12 8"><path d="M2.5 6 L6 2.5 L9.5 6" stroke="#a0a0a0" stroke-width="1.2" fill="none"/></svg>
<svg class="abs" style="left:1198.5px;top:475px" width="12" height="8" viewBox="0 0 12 8"><path d="M2.5 2 L6 5.5 L9.5 2" stroke="#a0a0a0" stroke-width="1.2" fill="none"/></svg>
<div class="track" style="left:1089px;top:81px;height:118px"></div>
<div class="thumb" style="left:1083.5px;top:132.0px"></div>
<div class="tick" style="left:1102px;top:87px"></div>
<div class="tick" style="left:1102px;top:139px"></div>
<div class="tick" style="left:1102px;top:191px"></div>
<div class="track" style="left:1143px;top:81px;height:118px"></div>
<div class="thumb" style="left:1137.5px;top:184.0px"></div>
<div class="tick" style="left:1156px;top:87px"></div>
<div class="tick" style="left:1156px;top:100px"></div>
<div class="tick" style="left:1156px;top:113px"></div>
<div class="tick" style="left:1156px;top:126px"></div>
<div class="tick" style="left:1156px;top:139px"></div>
<div class="tick" style="left:1156px;top:152px"></div>
<div class="tick" style="left:1156px;top:165px"></div>
<div class="tick" style="left:1156px;top:178px"></div>
<div class="tick" style="left:1156px;top:191px"></div>
<div class="track" style="left:1089px;top:207px;height:117px"></div>
<div class="thumb" style="left:1083.5px;top:310.5px"></div>
<div class="tick" style="left:1102px;top:214px"></div>
<div class="tick" style="left:1102px;top:227px"></div>
<div class="tick" style="left:1102px;top:240px"></div>
<div class="tick" style="left:1102px;top:253px"></div>
<div class="tick" style="left:1102px;top:266px"></div>
<div class="tick" style="left:1102px;top:279px"></div>
<div class="tick" style="left:1102px;top:292px"></div>
<div class="tick" style="left:1102px;top:305px"></div>
<div class="tick" style="left:1102px;top:318px"></div>
<div class="track" style="left:1143px;top:207px;height:117px"></div>
<div class="thumb" style="left:1137.5px;top:310.5px"></div>
<div class="tick" style="left:1156px;top:214px"></div>
<div class="tick" style="left:1156px;top:227px"></div>
<div class="tick" style="left:1156px;top:240px"></div>
<div class="tick" style="left:1156px;top:253px"></div>
<div class="tick" style="left:1156px;top:266px"></div>
<div class="tick" style="left:1156px;top:279px"></div>
<div class="tick" style="left:1156px;top:292px"></div>
<div class="tick" style="left:1156px;top:305px"></div>
<div class="tick" style="left:1156px;top:318px"></div>
<div class="track" style="left:1089px;top:334px;height:117px"></div>
<div class="thumb" style="left:1083.5px;top:436.9px"></div>
<div class="tick" style="left:1102px;top:341px"></div>
<div class="tick" style="left:1102px;top:354px"></div>
<div class="tick" style="left:1102px;top:367px"></div>
<div class="tick" style="left:1102px;top:380px"></div>
<div class="tick" style="left:1102px;top:393px"></div>
<div class="tick" style="left:1102px;top:406px"></div>
<div class="tick" style="left:1102px;top:419px"></div>
<div class="tick" style="left:1102px;top:432px"></div>
<div class="tick" style="left:1102px;top:445px"></div>
<div class="vlabel" style="left:1058px;top:197px;line-height:18px">Reverser</div>
<div class="vlabel" style="left:1112px;top:197px;line-height:18px">Throttle</div>
<div class="vlabel" style="left:1058px;top:324px;line-height:18px">Dynamic Brakes</div>
<div class="vlabel" style="left:1112px;top:324px;line-height:18px">Train Brakes</div>
<div class="vlabel" style="left:1058px;top:451px;line-height:18px">Indy Brakes</div>
<div class="btn" style="left:1056px;top:458px;width:115px;height:20px;line-height:20px">Indy Bail Off</div>
<div class="btn" style="left:1056px;top:482px;width:115px;height:6px;border-bottom:none"></div>
<div class="abs" style="left:1051px;top:487px;width:162px;height:23px;background:#f3f2f0"></div>
<div class="tab sel" style="left:1052px;width:46px">Driver 1</div>
<div class="tab" style="left:1098px;width:30px">DPU</div>
<div class="tab" style="left:1128px;width:36px">Radio</div>
<div class="tab" style="left:1164px;width:38px">Lights</div>
<div class="abs" style="left:1051px;top:487px;width:162px;height:1px;background:#9a9a9a"></div>
<div class="abs" style="left:1051px;top:508px;width:165px;height:1px;background:#a3a09c"></div>

  <!-- STATUS BAR -->
  <div class="abs" style="left:0;top:511px;width:1216px;height:22px;background:#f0eeed"></div>
  <div class="abs" style="left:4.5px;top:515px;font-size:12.5px;letter-spacing:-0.22px;color:#111">11/25/2024 9:41:36 AM</div>
  <div class="abs" style="left:133px;top:512px;width:1px;height:18px;background:#6a6a6a"></div>
  <svg class="abs" style="left:137px;top:513px" width="20" height="16" viewBox="137 513 20 16">
    <g fill="none" stroke="#4a4a4a" stroke-width="1.2" stroke-linecap="round">
      <path d="M3.2 -2.4 H-1.9 A2.4 2.4 0 0 0 -1.9 2.4 H1.2" transform="translate(144.4 523.2) rotate(-33)"/>
      <path d="M-3.2 2.4 H1.9 A2.4 2.4 0 0 0 1.9 -2.4 H-1.2" transform="translate(149.2 518.8) rotate(-33)"/>
      <path d="M143.6 515.6 L144.2 516.8 M146 514.8 L146.2 516.2 M141.6 517 L142.8 517.6" stroke-width="0.9"/>
      <path d="M150 526.4 L149.4 525.2 M147.6 527.2 L147.4 525.8 M152 525 L150.8 524.4" stroke-width="0.9"/>
    </g>
  </svg>
  <div class="abs" style="left:161px;top:515px;font-size:12.5px;letter-spacing:-0.3px;color:#111">Disconnected</div>
  <div class="abs" style="right:5px;top:515px;font-size:12.5px;letter-spacing:-0.62px;color:#111">Version: 1.0.0.3</div>
  <div class="abs" style="left:0;top:532px;width:1216px;height:1px;background:#8f8f8f"></div>
  <div class="abs" style="left:0;top:0;width:1216px;height:533px;border:1px solid #b4b4b4;border-radius:7px;box-shadow:0 0 0 8px #ededed;pointer-events:none"></div>
</div>
</body>
</html>
